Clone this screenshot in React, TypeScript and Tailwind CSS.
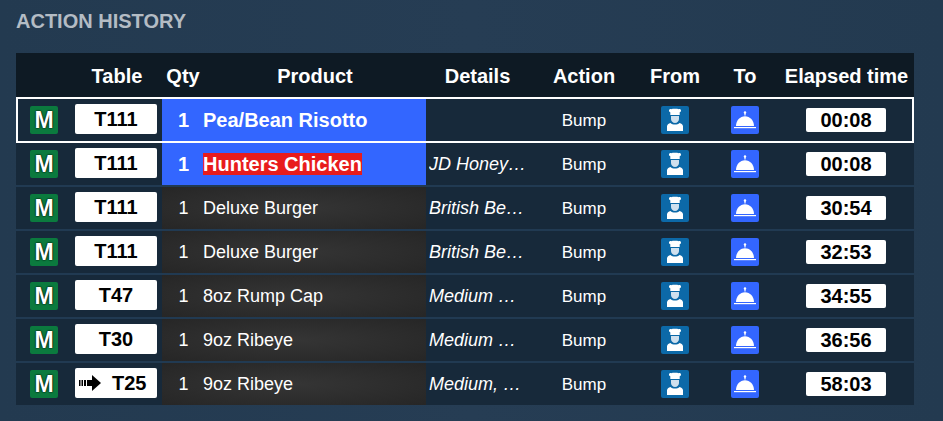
const rows = [
  { t: "T111", p: "Pea/Bean Risotto", d: "", e: "00:08", s: "sel" },
  { t: "T111", p: "Hunters Chicken", d: "JD Honey Glaze", e: "00:08", s: "red" },
  { t: "T111", p: "Deluxe Burger", d: "British Beef Patty", e: "30:54", s: "" },
  { t: "T111", p: "Deluxe Burger", d: "British Beef Patty", e: "32:53", s: "" },
  { t: "T47", p: "8oz Rump Cap", d: "Medium Rare Cook", e: "34:55", s: "" },
  { t: "T30", p: "9oz Ribeye", d: "Medium Rare Cook", e: "36:56", s: "" },
  { t: "T25", p: "9oz Ribeye", d: "Medium, Peppercorn", e: "58:03", s: "", arrow: true },
];

function Chef() {
  return (
    <svg width="28" height="28" viewBox="0 0 28 28" className="rounded-[2px] bg-[#0c69a8]">
      <path d="M8 4.500c0-1.300 1.500-1.800 2.500-1.300.8-.5 6.200-.5 7 0 1-.5 2.500 0 2.500 1.300 0 1-.6 1.500-1.300 1.700V9H9.300V6.200C8.600 6 8 5.500 8 4.500z" fill="#fff" />
      <path d="M10 10h8v3c0 2.300-1.800 4-4 4s-4-1.700-4-4z" fill="#cfe0ee" />
      <path d="M9.500 17c1 1 2.800 1.500 4.500 1.500s3.500-.5 4.500-1.500c2 .4 3.500 1.700 3.500 3.600V25H6v-4.400c0-1.900 1.500-3.200 3.500-3.600z" fill="#fff" />
    </svg>
  );
}

function Bell() {
  return (
    <svg width="28" height="28" viewBox="0 0 28 28" className="rounded-[2px] bg-[#3366ff]">
      <circle cx="14" cy="6.500" r="1.200" fill="#fff" />
      <rect x="13.400" y="6.500" width="1.200" height="3" fill="#fff" />
      <path d="M5 20c0-5.500 4-9.800 9-9.800s9 4.300 9 9.800z" fill="#fff" />
      <rect x="3" y="21" width="22" height="1.200" fill="#fff" />
    </svg>
  );
}

function Arrow() {
  return (
    <svg width="23" height="18" viewBox="0 0 23 18" className="shrink-0">
      <rect x="0" y="6" width="1.500" height="6" />
      <rect x="2.500" y="6" width="1.500" height="6" />
      <rect x="5" y="6" width="2" height="6" />
      <rect x="8" y="6" width="5" height="6" />
      <path d="M13 1l9 8-9 8z" />
    </svg>
  );
}

export default function App() {
  return (
    <div
      className="h-[421px] w-[943px] overflow-hidden bg-[linear-gradient(90deg,#233a50_0%,#263d54_50%,#233a50_100%)] px-4 pt-[10px]"
      style={{ fontFamily: '"Liberation Sans", Arial, sans-serif' }}
    >
      <h1 className="h-[43px] text-[20px] leading-[23px] font-bold text-[#b4bcc4]">ACTION HISTORY</h1>
      <div className="w-[898px] bg-[#17293a]">
        <div className="flex h-11 items-center bg-[#0e1a24] pt-[2px] text-center text-[20px] font-bold text-white">
          <div className="w-14" />
          <div className="w-[90px]">Table</div>
          <div className="w-[42px]">Qty</div>
          <div className="w-[222px]">Product</div>
          <div className="w-[103px]">Details</div>
          <div className="w-[110px]">Action</div>
          <div className="w-[72px]">From</div>
          <div className="w-[68px]">To</div>
          <div className="w-[135px] whitespace-nowrap">Elapsed time</div>
        </div>
        <div className="flex flex-col">
          {rows.map((r, i) => {
            const sel = r.s === "sel";
            const blue = r.s !== "";
            return (
              <div
                key={i}
                className={
                  sel
                    ? "relative flex h-[46px] items-center bg-[#17293a] text-white"
                    : "flex h-[44px] items-center border-b-2 border-[#213a52] bg-[#17293a] text-white last:h-[42px] last:border-b-0"
                }
              >
                <div className="flex w-14 justify-center">
                  <span className="flex size-7 items-center justify-center rounded-[2px] bg-[#0b7a3e] text-[23px] font-bold text-white [text-shadow:0_0_1px_#000,0_0_2px_#000]">M</span>
                </div>
                <div className="flex w-[90px] pl-[3px]">
                  <span className={`mb-[2px] flex h-[30px] w-[82px] items-center rounded-[2px] bg-white text-[20px] font-bold text-black ${r.arrow ? "gap-[10px] pl-1" : "justify-center"}`}>
                    {r.arrow && <Arrow />}
                    {r.t}
                  </span>
                </div>
                <div className={`flex h-full w-[264px] items-center ${blue ? "bg-[#3366ff]" : "bg-[radial-gradient(ellipse_at_center,#353535_0%,#262626_100%)]"}`}>
                  <div className={`ml-px w-[41px] text-center ${blue ? "text-[20px] font-bold" : "text-[18px]"}`}>1</div>
                  <div className={`-ml-px ${blue ? "text-[20px] font-bold" : "text-[18px]"}`}>
                    <span className={r.s === "red" ? "bg-[#e81c1c]" : ""}>{r.p}</span>
                  </div>
                </div>
                <div className="w-[103px] pl-[3px]"><div className="w-[98px] truncate text-[18px] italic">{r.d}</div></div>
                <div className="mt-[2px] w-[110px] text-center text-[17px]">Bump</div>
                <div className="flex w-[72px] justify-center"><Chef /></div>
                <div className="flex w-[68px] justify-center"><Bell /></div>
                <div className="flex w-[134px] justify-center">
                  <span className="flex h-6 w-20 items-center justify-center rounded-[2px] bg-white text-[20px] font-bold text-black">{r.e}</span>
                </div>
                {sel && <div className="absolute inset-0 border-2 border-white" />}
              </div>
            );
          })}
        </div>
      </div>
    </div>
  );
}
